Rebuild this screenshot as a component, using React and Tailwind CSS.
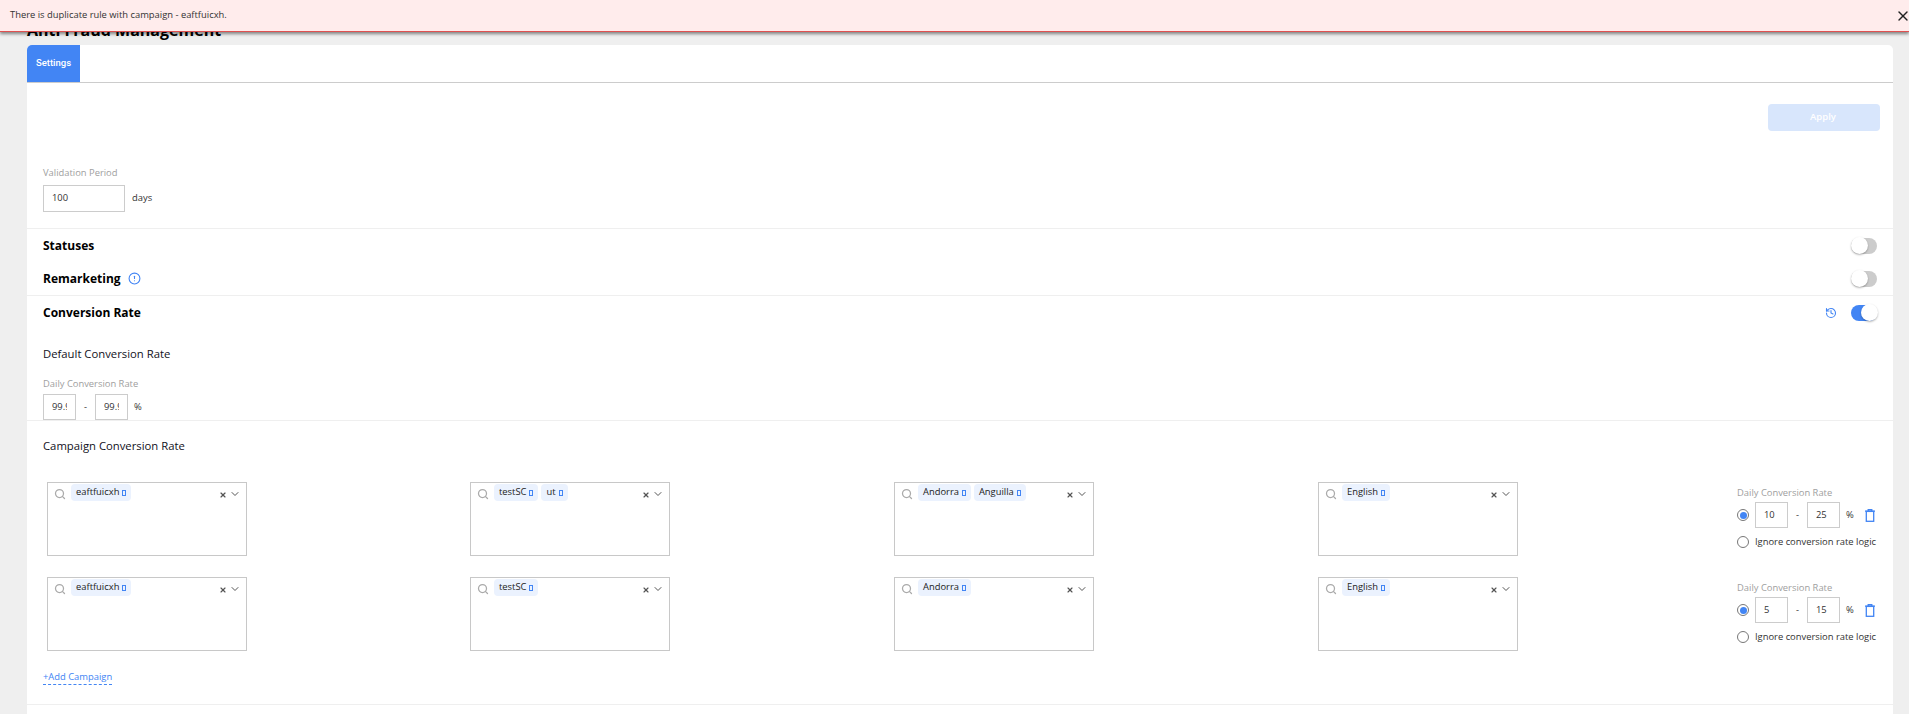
import React from 'react'
import { Search, X, ChevronDown, History, Info } from 'lucide-react'

const FONT = "font-['Open_Sans',sans-serif]"

const rows = [
  {
    selects: [['eaftfuicxh'], ['testSC', 'ut'], ['Andorra', 'Anguilla'], ['English']],
    min: '10',
    max: '25',
  },
  {
    selects: [['eaftfuicxh'], ['testSC'], ['Andorra'], ['English']],
    min: '5',
    max: '15',
  },
]

const Toggle = ({ on }) => (
  <div className={`relative h-4 w-[26px] rounded-full ${on ? 'bg-[#4285f4]' : 'bg-[#cccccc]'}`}>
    <div className={`absolute -top-px h-[17px] w-[17px] rounded-full bg-white shadow-[0_1px_2px_rgba(0,0,0,0.3)] ${on ? 'right-[-1px]' : 'left-0'}`} />
  </div>
)

const NumBox = ({ value, className }) => (
  <div className={`flex items-center border border-[#cccccc] bg-white pl-2 pr-2 text-[9.4px] text-[#333333] ${className}`}>
    <span className="block w-full overflow-hidden whitespace-nowrap">{value}</span>
  </div>
)

const Chip = ({ label }) => (
  <span className="flex h-[17px] items-center gap-[3px] rounded-sm bg-[#ebf2fe] px-[5px] text-[9.4px] text-[#222222]">
    {label}
    <span className="h-[6px] w-[4px] border border-[#4285f4]" />
  </span>
)

const MultiSelect = ({ items }) => (
  <div className="relative flex h-[74px] w-[200px] items-start gap-[3px] border border-[#c8c8c8] bg-white pl-[6px] pt-[1px]">
    <Search size={12} strokeWidth={2.5} className="mr-[2px] mt-[4px] text-[#aaaaaa]" />
    {items.map((item) => (
      <Chip key={item} label={item} />
    ))}
    <div className="absolute right-[5px] top-[5px] flex items-center gap-[2px] text-[#555555]">
      <X size={8} strokeWidth={3.5} className="mt-[2px]" />
      <ChevronDown size={12} strokeWidth={2} />
    </div>
  </div>
)

const Radio = ({ on }) => (
  <div className="flex h-[12px] w-[12px] items-center justify-center rounded-full border border-[#777777] bg-white">
    {on && <div className="h-[7px] w-[7px] rounded-full bg-[#4285f4]" />}
  </div>
)

const TrashIcon = () => (
  <svg width="10" height="13" viewBox="0 0 10 13" fill="none" stroke="#4285f4" strokeWidth="1.3" className="ml-[11px]">
    <path d="M0 2.2h10M3.2 2V.7h3.6V2" />
    <rect x="1.3" y="2.4" width="7.4" height="9.9" />
  </svg>
)

const RatePanel = ({ min, max }) => (
  <div className="flex flex-col pt-[4px]">
    <div className="text-[9.4px] leading-[14px] text-[#a0a0a0]">Daily Conversion Rate</div>
    <div className="mt-[2px] flex items-center">
      <Radio on />
      <NumBox value={min} className="ml-[6px] h-[26px] w-[33px]" />
      <span className="w-[19px] text-center text-[9.4px] text-[#333333]">-</span>
      <NumBox value={max} className="h-[26px] w-[33px]" />
      <span className="ml-[6px] text-[9.4px] text-[#333333]">%</span>
      <TrashIcon />
    </div>
    <div className="mt-[8px] flex items-center gap-[6px]">
      <Radio />
      <span className="whitespace-nowrap text-[9.4px] leading-[12px] text-[#333333]">Ignore conversion rate logic</span>
    </div>
  </div>
)

export default function App() {
  return (
    <div className={`relative h-[714px] w-full overflow-hidden bg-[#efefef] ${FONT}`}>
      {/* error banner sits over the page title */}
      <div className="absolute inset-x-0 top-0 z-10 flex h-[32px] items-center justify-between border-b border-[#e05050] bg-[#ffecec] pl-[10px] pr-0 shadow-[0_2px_3px_rgba(0,0,0,0.45)]">
        <span className="text-[9.4px] text-[#333333]">There is duplicate rule with campaign - eaftfuicxh.</span>
        <X size={16} strokeWidth={2} className="-mr-[2px] text-[#222222]" />
      </div>

      <div className="pl-[27px] pr-[16px]">
        <h1 className="pt-[17px] pb-[2px] text-[16px] font-bold leading-[26px] text-black">Anti Fraud Management</h1>

        <div className="h-[700px] rounded-t-[5px] bg-white">
          <div className="flex h-[38px] border-b border-[#cccccc]">
            <div className="flex h-[37px] w-[53px] items-center justify-center rounded-tl-[5px] bg-[#4285f4] font-['Roboto',sans-serif] text-[9.5px] font-medium text-white">
              Settings
            </div>
          </div>

          <div className="flex justify-end pr-[13px] pt-[21px]">
            <button className="h-[27px] w-[112px] rounded-sm bg-[#d8e6fc] pr-[2px] text-[9.5px] font-semibold text-white">Apply</button>
          </div>

          <div className="border-b border-[#efefef] pb-[16px] pl-[16px] pt-[35px]">
            <div className="text-[9.4px] leading-[14px] text-[#a0a0a0]">Validation Period</div>
            <div className="mt-[5px] flex items-center gap-[7px]">
              <NumBox value="100" className="h-[27px] w-[82px]" />
              <span className="text-[9.4px] text-[#333333]">days</span>
            </div>
          </div>

          <div className="flex h-[33px] items-center justify-between pl-[16px] pr-[16px] pt-[1px]">
            <span className="text-[12px] font-bold text-black">Statuses</span>
            <Toggle />
          </div>
          <div className="flex h-[34px] items-center justify-between border-b border-[#efefef] pl-[16px] pr-[16px]">
            <span className="flex items-center gap-[7px] text-[12px] font-bold text-black">
              Remarketing
              <Info size={13} strokeWidth={2} className="rotate-180 text-[#4285f4]" />
            </span>
            <Toggle />
          </div>
          <div className="flex h-[33px] items-center justify-between pl-[16px] pr-[16px]">
            <span className="text-[12px] font-bold text-black">Conversion Rate</span>
            <div className="flex items-center gap-[14px]">
              <History size={12} strokeWidth={2.2} className="text-[#4285f4]" />
              <Toggle on />
            </div>
          </div>

          <div className="border-b border-[#efefef] pl-[16px] pt-[17px]">
            <div className="text-[11.3px] font-medium leading-[16px] text-[#111122]">Default Conversion Rate</div>
            <div className="mt-[15px] text-[9.4px] leading-[14px] text-[#a0a0a0]">Daily Conversion Rate</div>
            <div className="mt-[3px] flex items-center">
              <NumBox value="99.99" className="h-[26px] w-[33px]" />
              <span className="w-[19px] text-center text-[9.4px] text-[#333333]">-</span>
              <NumBox value="99.99" className="h-[26px] w-[33px]" />
              <span className="ml-[6px] text-[9.4px] text-[#333333]">%</span>
            </div>
          </div>

          <div className="border-b border-[#efefef] pb-[18px] pl-[16px] pt-[17px]">
            <div className="text-[11.3px] font-medium leading-[16px] text-[#111122]">Campaign Conversion Rate</div>

            <div className="mt-[28px] flex flex-col gap-[21px] pl-[4px]">
              {rows.map((row, i) => (
                <div key={i} className="grid grid-cols-[423px_424px_424px_419px_1fr]">
                  {row.selects.map((items, j) => (
                    <MultiSelect key={j} items={items} />
                  ))}
                  <RatePanel min={row.min} max={row.max} />
                </div>
              ))}
            </div>

            <div className="mt-[11px]">
              <span className="border-b border-dashed border-[#4285f4] pb-[1px] text-[9.4px] text-[#4285f4]">+Add Campaign</span>
            </div>
          </div>
        </div>
      </div>
    </div>
  )
}
